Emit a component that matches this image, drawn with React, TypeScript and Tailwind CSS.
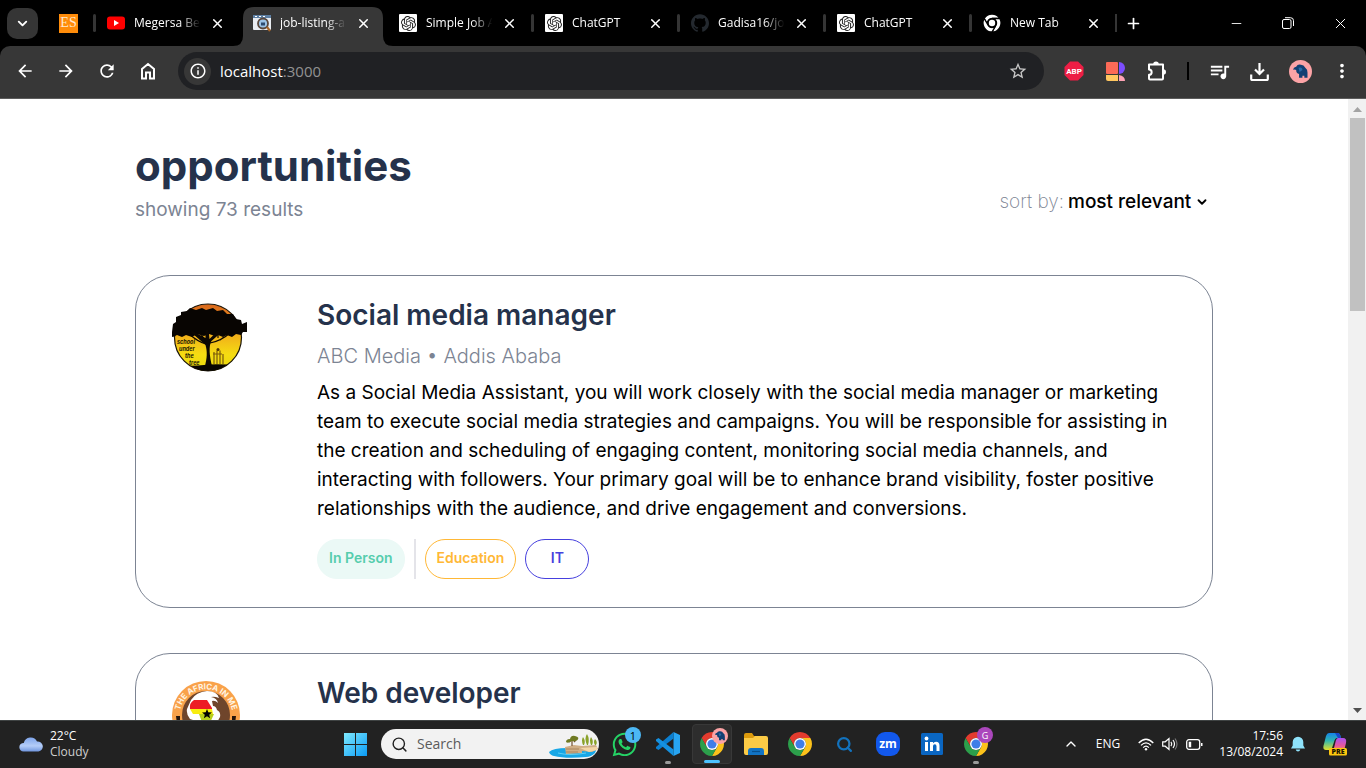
import React from "react";
import {
  MdArrowBack,
  MdArrowForward,
  MdRefresh,
  MdInfoOutline,
  MdStarBorder,
  MdQueueMusic,
  MdMoreVert,
} from "react-icons/md";
import { SiOpenai, SiGithub } from "react-icons/si";
import { FaWhatsapp } from "react-icons/fa";
import { ChevronDown, ChevronUp, Minus, Plus, Search, X } from "lucide-react";

/* ---------- Favicons ---------- */

function YouTubeIcon() {
  return (
    <svg viewBox="0 0 18 14" className="h-[14px] w-[18px]" aria-hidden="true">
      <rect width="18" height="13" y="0.5" rx="3" fill="#f00" />
      <path d="M7 4l5 3-5 3z" fill="#fff" />
    </svg>
  );
}

function JobIcon() {
  return (
    <svg viewBox="0 0 18 18" className="size-[18px]" aria-hidden="true">
      <rect y="1" width="18" height="15" rx="1" fill="#e9edf2" />
      <rect y="1" width="18" height="3" fill="#5d7fa3" />
      <path d="M2 2.5h2M6 2.5h2M10 2.5h2" stroke="#fff" />
      <circle cx="10" cy="9.5" r="5" fill="#9cc3e6" stroke="#59473c" strokeWidth="1.8" />
      <path d="M8 8.5h4v3H8z" fill="#2d4a6e" />
      <path d="M14 13l3 4" stroke="#a8662a" strokeWidth="2.2" />
    </svg>
  );
}

function OpenAiIcon() {
  return (
    <span className="grid size-[18px] place-items-center rounded-[1px] bg-white text-[#222]">
      <SiOpenai size={15} />
    </span>
  );
}

const SECTORS = [
  "M3.22 12A24 24 0 0 1 44.78 12L24 12A12 12 0 0 0 13.61 30Z",
  "M44.78 12A24 24 0 0 1 24 48L34.39 30A12 12 0 0 0 24 12Z",
  "M24 48A24 24 0 0 1 3.22 12L13.61 30A12 12 0 0 0 34.39 30Z",
];

function NewTabIcon() {
  return (
    <svg viewBox="0 0 48 48" className="size-[18px]" aria-hidden="true">
      {SECTORS.map((d) => (
        <path key={d} d={d} fill="#fff" stroke="#000" strokeWidth="3.5" />
      ))}
      <circle cx="24" cy="24" r="13" fill="#000" />
      <circle cx="24" cy="24" r="8.5" fill="#fff" />
    </svg>
  );
}

function ChromeIcon() {
  return (
    <svg viewBox="0 0 48 48" className="size-6" aria-hidden="true">
      <path d={SECTORS[0]} fill="#e33b2e" />
      <path d={SECTORS[1]} fill="#fcc21b" />
      <path d={SECTORS[2]} fill="#2c9f4b" />
      <circle cx="24" cy="24" r="12" fill="#fff" />
      <circle cx="24" cy="24" r="9.2" fill="#3f7de8" />
    </svg>
  );
}

/* ---------- Browser chrome ---------- */

type Tab = { title: string; icon: React.ReactNode; active?: boolean; divider?: boolean };

const TABS: Tab[] = [
  { title: "Megersa Be", icon: <YouTubeIcon />, divider: true },
  { title: "job-listing-a", icon: <JobIcon />, active: true },
  { title: "Simple Job A", icon: <OpenAiIcon /> },
  { title: "ChatGPT", icon: <OpenAiIcon />, divider: true },
  { title: "Gadisa16/jo", icon: <SiGithub size={18} className="text-[#24292f]" />, divider: true },
  { title: "ChatGPT", icon: <OpenAiIcon />, divider: true },
  { title: "New Tab", icon: <NewTabIcon />, divider: true },
];

function TabItem({ title, icon, active, divider }: Tab) {
  return (
    <div className="relative flex h-full w-[146px] min-w-0 items-center pr-[14px] pl-[14px]">
      {active && (
        <svg viewBox="0 0 160 39" className="absolute -left-[6px] bottom-0 h-[39px] w-[160px]" aria-hidden="true">
          <path d="M0 39q10 0 10-10V11Q10 0 21 0H139q11 0 11 11v18q0 10 10 10z" fill="#373737" />
        </svg>
      )}
      {divider && <span className="absolute top-[14px] left-0 h-[18px] w-[3px] rounded-full bg-[#353535]" />}
      <span className="relative flex size-[18px] shrink-0 items-center justify-center">{icon}</span>
      <span className="relative ml-[9px] w-[70px] [mask-image:linear-gradient(to_right,black_65%,transparent_95%)] whitespace-nowrap">
        {title}
      </span>
      <button type="button" aria-label={`Close ${title}`} className="relative ml-auto grid size-4 place-items-center">
        <X size={15} strokeWidth={2.4} />
      </button>
    </div>
  );
}

function TabStrip() {
  return (
    <div className="flex h-[46px] shrink-0 items-center bg-black pl-[7px] text-xs text-white">
      <button type="button" aria-label="Search tabs" className="grid size-[31px] place-items-center rounded-[10px] bg-[#353535]">
        <ChevronDown size={15} strokeWidth={3} />
      </button>
      <span className="ml-[21px] grid size-[19px] place-items-center bg-[#ff8c0a] font-['Liberation_Serif',serif] text-sm leading-none text-[#ffe9cf]">
        ES
      </span>
      <div className="ml-[15px] flex h-full">
        {TABS.map((tab, i) => (
          <TabItem key={i} {...tab} />
        ))}
      </div>
      <span className="h-[18px] w-0.5 bg-[#353535]" />
      <button type="button" aria-label="New tab" className="ml-1.5 grid size-5 place-items-center">
        <Plus size={17} strokeWidth={2.4} />
      </button>
      <div className="ml-auto flex items-center">
        <button type="button" aria-label="Minimize" className="grid w-[52px] place-items-center">
          <Minus size={15} strokeWidth={1.4} />
        </button>
        <button type="button" aria-label="Restore" className="grid w-[52px] place-items-center">
          <svg viewBox="0 0 12 12" className="size-3" fill="none" stroke="currentColor" aria-hidden="true">
            <rect x="0.5" y="2.5" width="8.5" height="9" rx="1.5" />
            <path d="M3 .7h5.5q3 0 3 3V9" />
          </svg>
        </button>
        <button type="button" aria-label="Close window" className="grid w-[52px] place-items-center">
          <X size={17} strokeWidth={1.4} />
        </button>
      </div>
    </div>
  );
}

function HomeIcon() {
  return (
    <svg viewBox="0 0 16 18" className="h-[18px] w-4" fill="none" stroke="currentColor" strokeWidth="2" aria-hidden="true">
      <path d="M2 16.5V7l6-5 6 5v9.5h-4v-6H6v6z" />
    </svg>
  );
}

function BlocksIcon() {
  return (
    <svg viewBox="0 0 19 19" className="size-[19px]" aria-hidden="true">
      <rect width="12" height="12" rx="1" fill="#fb6a57" />
      <path d="M13 0a6 6 0 0 1 0 12z" fill="#7c4dff" />
      <path d="M0 13h12v6H2q-2 0-2-2z" fill="#ffc760" />
      <path d="M13 13q6 1 6 6h-6z" fill="#ffa3b5" />
    </svg>
  );
}

function PuzzleIcon() {
  return (
    <svg viewBox="0 0 20 20" className="size-5" fill="none" stroke="currentColor" strokeWidth="2" aria-hidden="true">
      <path d="M2 3.5h14V17.5q0 1-1 1H3q-1 0-1-1V13.8a2.6 2.6 0 0 0 0-5.3z" strokeLinejoin="round" />
      <path d="M6.2 3.4a2.8 2.8 0 0 1 5.6 0zM16.2 8.2a2.8 2.8 0 0 1 0 5.6z" fill="currentColor" stroke="none" />
    </svg>
  );
}

function Elephant({ size }: { size: string }) {
  return (
    <svg viewBox="0 0 24 24" className={size} aria-hidden="true">
      <circle cx="12" cy="12" r="12" fill="#fca3a6" />
      <path d="M4.500 10.500q0-3 3-3.500 1.500-3 5-2 3 0 4.500 3 2.500 1.500 2.300 5v5.500h-3.300v-2h-2v2h-3.500v-4q-3 0-3-4-2-1-3 0z" fill="#123f73" />
      <path d="M10 8q4-1 4 2.500l-3 2z" fill="#2a6aa6" />
    </svg>
  );
}

function DownloadIcon() {
  return (
    <svg viewBox="0 0 19 19" className="size-[19px]" fill="none" stroke="currentColor" strokeWidth="2.2" aria-hidden="true">
      <path d="M9.5 1v11M5 7.5l4.500 4.500L14 7.500M1.200 12.500v4.500q0 1 1 1h14.600q1 0 1-1v-4.500" />
    </svg>
  );
}

function Toolbar() {
  return (
    <div className="shrink-0 bg-black">
      <div className="flex h-[53px] items-center rounded-t-[10px] border-b border-[#5c5c5c] bg-[#373737] pr-[13px] pb-0.5 pl-[15px] text-white">
        <nav aria-label="Browser" className="flex items-center gap-[21px]">
          <button type="button" aria-label="Back" className="grid size-5 place-items-center"><MdArrowBack size={20} /></button>
          <button type="button" aria-label="Forward" className="grid size-5 place-items-center"><MdArrowForward size={20} /></button>
          <button type="button" aria-label="Reload" className="grid size-5 place-items-center"><MdRefresh size={20} /></button>
          <button type="button" aria-label="Home" className="grid size-5 place-items-center"><HomeIcon /></button>
        </nav>
        <div className="ml-5 flex h-[38px] min-w-0 flex-1 items-center rounded-full bg-[#202124] pr-4 pl-1.5">
          <span className="grid size-[27px] place-items-center rounded-full bg-[#373737]"><MdInfoOutline size={18} /></span>
          <span className="ml-[9px] text-[15px]">
            localhost<span className="text-[#929292]">:3000</span>
          </span>
          <button type="button" aria-label="Bookmark" className="ml-auto text-[#c7c7c7]"><MdStarBorder size={20} /></button>
        </div>
        <div className="ml-5 flex items-center">
          <svg viewBox="0 0 20 20" className="size-5" aria-hidden="true">
            <path d="M6 .5h8L19.500 6v8L14 19.500H6L.5 14V6z" fill="#ed1e45" />
            <text x="10" y="13" textAnchor="middle" fontSize="8" fontWeight="700" fontFamily="Roboto, sans-serif" fill="#fff">ABP</text>
          </svg>
          <span className="ml-[22px]"><BlocksIcon /></span>
          <span className="ml-[22px]"><PuzzleIcon /></span>
          <span className="ml-5 h-[18px] w-0.5 bg-black" />
          <span className="ml-[19px]"><MdQueueMusic size={23} /></span>
          <span className="ml-[19px]"><DownloadIcon /></span>
          <span className="ml-5"><Elephant size="size-[23px]" /></span>
          <span className="ml-[19px]"><MdMoreVert size={22} /></span>
        </div>
      </div>
    </div>
  );
}

/* ---------- Company logos ---------- */

function TreeLogo() {
  return (
    <svg viewBox="0 0 75 69" className="h-[69px] w-[75px]" role="img" aria-label="School under the tree">
      <defs>
        <linearGradient id="sunset" x1="0" y1="0" x2="0" y2="1">
          <stop offset="0" stopColor="#d9661c" />
          <stop offset="0.400" stopColor="#f0a51c" />
          <stop offset="0.750" stopColor="#f5dc12" />
          <stop offset="1" stopColor="#e8d80c" />
        </linearGradient>
        <clipPath id="disc"><circle cx="36" cy="34.500" r="33.500" /></clipPath>
      </defs>
      <circle cx="36" cy="34.500" r="33.500" fill="url(#sunset)" stroke="#1a1408" strokeWidth="1.200" />
      <path d="M0 29l1-8 3-2 0-5 5-2 0-3 6-1 3-3 6 2 6-2 4 2 7-2 4 3 6-1 4 4 6 0 3 5 5 1 1 4 5-2v10l-4 0-2 3-5-1-4 3-5-2-4 2-5-2-3 1-6-2-5 2-7-2-5 3-6-2-4 2-5-2-4 2-3-1z" fill="#080502" />
      <path d="M33 63c2-8 2.500-14 .5-21l-9-8-6-5 2-1 13 7 0-8h3l1 9 8-8 3 2-9 8c-3 5-2 15 .5 25z" fill="#0c0703" />
      <path d="M16 30q10 9 18 11M58 30q-9 8-20 10M46 28v7M27 28l7 11M52 34l-4 3" stroke="#0c0703" strokeWidth="1.200" fill="none" />
      <path clipPath="url(#disc)" d="M0 63q20 0 32-1 12-2 43 1v8H0z" fill="#080502" />
      <g fontSize="5.500" fontStyle="italic" fontWeight="700" fontFamily="Inter, sans-serif" fill="#211704">
        <text x="5" y="41">school</text>
        <text x="7" y="48">under</text>
        <text x="13" y="55">the</text>
        <text x="17" y="62">tree</text>
      </g>
      <path d="M42 61V49M45 61V47.500M48 61V47.500M51 61V51M41 51h9" stroke="#7b5a0c" strokeWidth="1.200" />
      <circle cx="46" cy="46.500" r="1.500" fill="#4b3509" />
    </svg>
  );
}

function AfricaLogo() {
  return (
    <svg viewBox="0 0 68 68" className="size-[68px]" role="img" aria-label="The Africa in me">
      <defs>
        <path id="ring" d="M8.500 42A26.500 26.500 0 1 1 59.500 42" />
      </defs>
      <circle cx="34" cy="34" r="34" fill="#f9a24a" />
      <circle cx="34" cy="34" r="24" fill="#6f452b" />
      <path d="M19 19q5-8 16-9 10 0 12 7-5-2-8-1 6 1 7 6-3-3-6-2l1 5q3 0 4 4 4 2 3 7l-8 14-6 8-4-2-3-15-9-3q-4-5-3-10z" fill="#fff" />
      <path d="M18 28q-1-6 4-9h13l5 8v1z" fill="#ed1c24" />
      <path d="M18 28h22l1 5H21z" fill="#f8ed10" />
      <path d="M27 33h15l-5 11h-6z" fill="#b8cf1b" />
      <path d="M35 28l1.300 3.300 3.700.2-2.800 2.300.9 3.500-3.100-2-3.100 2 .9-3.500-2.800-2.300 3.700-.2z" fill="#000" />
      <path d="M4 35h4v8H5zM60 35h4l-1 8h-3z" fill="#24140b" />
      <text fontSize="8" fontWeight="700" fill="#fff4e2">
        <textPath href="#ring" startOffset="50%" textAnchor="middle">THE AFRICA IN ME</textPath>
      </text>
    </svg>
  );
}

/* ---------- Job listing ---------- */

type Job = {
  title: string;
  logo: React.ReactNode;
  company?: string;
  place?: string;
  description?: string;
};

const JOBS: Job[] = [
  {
    title: "Social media manager",
    logo: <TreeLogo />,
    company: "ABC Media",
    place: "Addis Ababa",
    description:
      "As a Social Media Assistant, you will work closely with the social media manager or marketing team to execute social media strategies and campaigns. You will be responsible for assisting in the creation and scheduling of engaging content, monitoring social media channels, and interacting with followers. Your primary goal will be to enhance brand visibility, foster positive relationships with the audience, and drive engagement and conversions.",
  },
  { title: "Web developer", logo: <AfricaLogo /> },
];

function JobCard({ title, logo, company, place, description }: Job) {
  return (
    <article className="flex min-h-[333px] rounded-[35px] border border-[#7c8493] pr-9 pl-9">
      <div className="w-[145px] shrink-0 pt-[27px]">{logo}</div>
      <div className="min-w-0 flex-1 pt-[21px]">
        <h2 className="text-[28px] leading-9 font-semibold text-[#25324b]">{title}</h2>
        {company && (
          <p className="mt-[7px] text-xl leading-8 font-light text-[#7c8493]">
            {company} • {place}
          </p>
        )}
        {description && <p className="mt-1.5 text-[19px] leading-[29px] text-black">{description}</p>}
        {description && (
          <div className="mt-4 flex h-10 gap-[9px] text-sm leading-[35px] font-semibold">
            <span className="rounded-full border border-[#ebf9f6] bg-[#ebf9f6] px-[11px] text-[#56cdad]">In Person</span>
            <span className="w-0.5 bg-[#e4e4e9]" />
            <span className="rounded-full border border-[#ffb836] px-[11px] text-[#ffb836]">Education</span>
            <span className="min-w-16 rounded-full border border-[#4640de] px-[11px] text-center text-[#4640de]">IT</span>
          </div>
        )}
      </div>
    </article>
  );
}

function Page() {
  return (
    <main className="min-w-0 flex-1 overflow-hidden bg-white px-[135px] font-['Inter',sans-serif]">
      <header className="flex items-end justify-between pt-[42px]">
        <div>
          <h1 className="text-[42px] leading-[50px] font-bold text-[#25324b]">opportunities</h1>
          <p className="mt-1 text-[19px] leading-[30px] text-[#7c8493]">showing 73 results</p>
        </div>
        <div className="mb-[9px] flex items-center pr-1 text-[19px] leading-7">
          <label htmlFor="sort" className="mr-1 font-extralight text-[#7c8493]">sort by:</label>
          <select id="sort" className="appearance-none bg-transparent font-medium text-black">
            <option>most relevant</option>
          </select>
          <ChevronDown size={14} strokeWidth={3.200} className="pointer-events-none ml-[3px]" aria-hidden="true" />
        </div>
      </header>
      <section aria-label="Jobs" className="mt-[50px] flex flex-col gap-[45px]">
        {JOBS.map((job) => (
          <JobCard key={job.title} {...job} />
        ))}
      </section>
    </main>
  );
}

function ScrollRail() {
  return (
    <div className="flex w-[18px] shrink-0 flex-col items-center bg-[#f1f1f1]">
      <svg viewBox="0 0 18 19" className="h-[19px] w-[18px]" aria-hidden="true"><path d="M5 13l4.500-5 4.500 5z" fill="#a3a3a3" /></svg>
      <div className="h-[31%] w-[15px] bg-[#c1c1c1]" />
      <svg viewBox="0 0 18 19" className="mt-auto h-[19px] w-[18px]" aria-hidden="true"><path d="M5 7l4.500 5 4.500-5z" fill="#505050" /></svg>
    </div>
  );
}

/* ---------- Taskbar ---------- */

function CloudIcon() {
  return (
    <svg viewBox="0 0 24 16" className="h-4 w-6" aria-hidden="true">
      <defs>
        <linearGradient id="cloud" x1="0" y1="0" x2="0" y2="1">
          <stop offset="0" stopColor="#7ea4ea" />
          <stop offset="0.600" stopColor="#b4cdf8" />
          <stop offset="1" stopColor="#7096de" />
        </linearGradient>
      </defs>
      <path d="M4.500 15.500a4.300 4.300 0 0 1 .3-8.600A7 7 0 0 1 18 5.500a5 5 0 0 1 1.500 10z" fill="url(#cloud)" />
    </svg>
  );
}

function WindowsIcon() {
  return (
    <svg viewBox="0 0 23 23" className="size-[23px]" aria-hidden="true">
      <defs>
        <linearGradient id="win" x1="0" y1="0" x2="23" y2="23" gradientUnits="userSpaceOnUse">
          <stop offset="0" stopColor="#7feaff" />
          <stop offset="1" stopColor="#0a9bf5" />
        </linearGradient>
      </defs>
      <path d="M0 0h11v11H0zM12 0h11v11H12zM0 12h11v11H0zM12 12h11v11H12z" fill="url(#win)" />
    </svg>
  );
}

function IslandArt() {
  return (
    <svg viewBox="0 0 50 30" className="h-[30px] w-[50px]" aria-hidden="true">
      <path d="M0 23q4-4 18-4h30l-2 5q-4 4-9 4-20 2-32-1-4-1-5-4z" fill="#18a7e6" />
      <path d="M9 24q12 3 28 0" stroke="#5fd0f4" fill="none" />
      <path d="M16 18l9-2 8 1 14-1 2 4-6 3-10-1v2l-16 1z" fill="#cfae86" />
      <path d="M17 20h13M17 23h12" stroke="#a9865f" />
      <path d="M31 19l17-1 0 3-8 2z" fill="#f3d5a6" />
      <path d="M23 11v6M21 13l-2-2M25 13l2-2" stroke="#72502d" strokeWidth="1.200" />
      <path d="M17 13q0-3 4-3 1-4 5-3 5 1 2.500 4-3 2-5.500 1-4 3-6 1z" fill="#6f7a22" />
      <path d="M34 16q-2-5 0-8 3 4 1 8zM38 16q-3-7 0-11 3 5 1 11zM42 16q-2-5 0-8 3 4 1 8zM46 16q-2-3 0-6 3 3 1 6z" fill="#8aa22a" />
    </svg>
  );
}

function VsCodeIcon() {
  return (
    <svg viewBox="0 0 24 24" className="size-6" aria-hidden="true">
      <path d="M17.500 0L24 3v18l-6.500 3z" fill="#27a5f2" />
      <path d="M17.500 0v6.500L2.500 18 0 16.500V15z" fill="#0b7fd0" />
      <path d="M17.500 24v-6.500L2.500 6 0 7.500V9z" fill="#1591e0" />
    </svg>
  );
}

function FolderIcon() {
  return (
    <svg viewBox="0 0 24 22" className="h-[22px] w-6" aria-hidden="true">
      <path d="M0 2q0-2 2-2h6l2 3h6v6H0z" fill="#dc9a0c" />
      <path d="M0 5h9l2-2h11q2 0 2 2v15q0 2-2 2H2q-2 0-2-2z" fill="#fccb46" />
      <path d="M4 22v-4q0-3 3-3h10q3 0 3 3v4z" fill="#1274c5" />
      <path d="M8 18.500h8" stroke="#07508f" strokeWidth="1.200" />
    </svg>
  );
}

function ZoomIcon() {
  return (
    <svg viewBox="0 0 24 24" className="size-6" aria-hidden="true">
      <rect width="24" height="24" rx="9" fill="#1258ec" />
      <text x="12" y="15.500" textAnchor="middle" fontSize="12" fontWeight="700" fill="#fff">zm</text>
    </svg>
  );
}

function LinkedInIcon() {
  return (
    <svg viewBox="0 0 22 22" className="size-[22px]" aria-hidden="true">
      <rect width="22" height="22" rx="1.500" fill="#0a66c2" />
      <circle cx="5.500" cy="5.500" r="1.900" fill="#fff" />
      <path d="M4 9h3v9H4zM9 9h3v1.300q1-1.500 3-1.500 3.500 0 3.500 4V18h-3v-4.700q0-2-1.700-2-1.800 0-1.800 2V18H9z" fill="#fff" />
    </svg>
  );
}

type AppEntry = {
  name: string;
  icon: React.ReactNode;
  badge?: React.ReactNode;
  state?: "focused" | "open";
};

const APPS: AppEntry[] = [
  {
    name: "WhatsApp",
    icon: <FaWhatsapp size={27} className="text-[#25d366]" />,
    badge: <span className="grid size-4 place-items-center rounded-full bg-[#4cb8f5] text-[11px] leading-none text-black">1</span>,
  },
  { name: "Visual Studio Code", icon: <VsCodeIcon />, state: "open" },
  { name: "Chrome", icon: <ChromeIcon />, badge: <Elephant size="size-4" />, state: "focused" },
  { name: "File Explorer", icon: <FolderIcon /> },
  { name: "Chrome", icon: <ChromeIcon /> },
  { name: "Finder", icon: <Search size={17} strokeWidth={3.200} className="text-[#1272bd]" /> },
  { name: "Zoom", icon: <ZoomIcon /> },
  { name: "LinkedIn", icon: <LinkedInIcon /> },
  {
    name: "Chrome",
    icon: <ChromeIcon />,
    badge: <span className="grid size-4 place-items-center rounded-full bg-[#ab47bc] text-[9px] leading-none text-white">G</span>,
    state: "open",
  },
];

function AppButton({ name, icon, badge, state }: AppEntry) {
  return (
    <button
      type="button"
      aria-label={name}
      className={
        state === "focused"
          ? "relative grid size-10 place-items-center rounded border border-[#383838] bg-[#2d2d2d]"
          : "relative grid size-10 place-items-center"
      }
    >
      {icon}
      {badge && <span className="absolute top-[3px] right-[3px]">{badge}</span>}
      {state === "focused" && <span className="absolute bottom-0 left-[11px] h-[3px] w-4 rounded-full bg-[#4cc2ff]" />}
      {state === "open" && <span className="absolute bottom-0 left-[17px] h-[3px] w-1.5 rounded-full bg-[#9a9a9a]" />}
    </button>
  );
}

function TrayIcons() {
  return (
    <>
      <svg viewBox="0 0 16 13" className="ml-[18px] h-[13px] w-4" fill="none" stroke="currentColor" strokeWidth="1.300" aria-hidden="true">
        <path d="M.7 5q7.300-7.500 14.600 0M3 7.400q5-5 10 0M5.200 9.600q2.800-2.800 5.600 0" />
        <circle cx="8" cy="11.300" r="1.200" fill="currentColor" stroke="none" />
      </svg>
      <svg viewBox="0 0 16 14" className="ml-2 h-[14px] w-4" fill="none" stroke="currentColor" strokeWidth="1.200" aria-hidden="true">
        <path d="M.7 4.800h2.500L7 1.500v11L3.200 9.200H.7zM9 4.800q1.500 2.200 0 4.400M11 3q3 4 0 8" />
        <path d="M13 1.500q4 5.500 0 11" stroke="#777" />
      </svg>
      <svg viewBox="0 0 17 11" className="ml-2 h-[11px] w-[17px]" fill="none" stroke="currentColor" strokeWidth="1.300" aria-hidden="true">
        <rect x=".7" y=".7" width="13" height="9.600" rx="2.200" />
        <path d="M2.700 2.800h2.500v5.400H2.700zM15 4h1.500v3H15z" fill="currentColor" stroke="none" />
      </svg>
    </>
  );
}

function CopilotIcon() {
  return (
    <svg viewBox="0 0 24 24" className="size-6" aria-hidden="true">
      <defs>
        <linearGradient id="copA" x1="0" y1="0" x2="0" y2="1">
          <stop offset="0" stopColor="#1583e8" />
          <stop offset="0.450" stopColor="#2fb6b0" />
          <stop offset="1" stopColor="#e2e02c" />
        </linearGradient>
        <linearGradient id="copB" x1="0" y1="0" x2="0" y2="1">
          <stop offset="0" stopColor="#a950f0" />
          <stop offset="0.600" stopColor="#e8589b" />
          <stop offset="1" stopColor="#f7a14b" />
        </linearGradient>
      </defs>
      <path d="M6 1h9q2 0 3 5h-4q-2 0-3 4l-2 6q-1 2-3 2H3q-4 0-2-6l2-8q1-3 3-3z" fill="url(#copA)" />
      <path d="M12 1h3q2 0 3 5h-3z" fill="#1848c8" />
      <path d="M15 6h5q4 0 3 5l-2 8h-9q-2 0-1-3l2-8q1-2 2-2z" fill="url(#copB)" />
      <rect x="6" y="16" width="18" height="7.500" rx="1.500" fill="#fcc70f" />
      <text x="15" y="22.300" textAnchor="middle" fontSize="7" fontWeight="800" fill="#1a1500">PRE</text>
    </svg>
  );
}

function Taskbar() {
  return (
    <footer className="flex h-12 shrink-0 items-center border-t border-[#3f4343] bg-[#222] pb-px text-white">
      <div className="flex w-[335px] items-center gap-[7px] pl-[19px] text-xs leading-4">
        <CloudIcon />
        <div>
          <p>22°C</p>
          <p className="text-[#cfcfcf]">Cloudy</p>
        </div>
      </div>
      <button type="button" aria-label="Start" className="grid size-10 place-items-center"><WindowsIcon /></button>
      <div className="ml-1.5 flex h-[30px] w-[218px] items-center overflow-hidden rounded-full bg-[#f2f2f2] pl-2.5">
        <Search size={17} strokeWidth={2} className="shrink-0 text-[#222]" aria-hidden="true" />
        <input
          type="text"
          aria-label="Search"
          placeholder="Search"
          className="ml-[9px] min-w-0 flex-1 bg-transparent text-sm text-black outline-none placeholder:text-[#5a5a5a]"
        />
        <IslandArt />
      </div>
      <div className="ml-[5px] flex gap-1">
        {APPS.map((app, i) => (
          <AppButton key={i} {...app} />
        ))}
      </div>
      <div className="ml-auto flex items-center pr-[19px] text-xs leading-4">
        <ChevronUp size={16} strokeWidth={2} aria-hidden="true" />
        <span className="ml-[17px]">ENG</span>
        <TrayIcons />
        <time className="ml-4 text-right" dateTime="2024-08-13T17:56">
          17:56
          <br />
          13/08/2024
        </time>
        <svg viewBox="0 0 14 16" className="ml-2 h-4 w-[14px]" aria-hidden="true">
          <path d="M0 12.500L1.700 9.500V6a5.300 5.300 0 0 1 10.600 0v3.500L14 12.500zM4.700 13.500h4.600q-.5 2-2.300 2t-2.300-2z" fill="#8fe3fb" />
        </svg>
        <span className="ml-[18px]"><CopilotIcon /></span>
      </div>
    </footer>
  );
}

export default function App() {
  return (
    <div className="flex h-screen flex-col overflow-hidden font-['Open_Sans',sans-serif]">
      <TabStrip />
      <Toolbar />
      <div className="flex min-h-0 flex-1">
        <Page />
        <ScrollRail />
      </div>
      <Taskbar />
    </div>
  );
}
